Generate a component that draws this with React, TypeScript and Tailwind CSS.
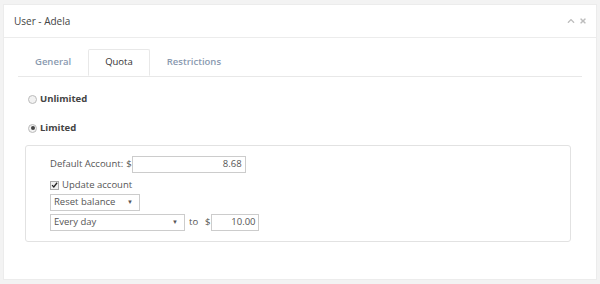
import { FaChevronUp, FaTimes } from "react-icons/fa";

const tabs = ["General", "Quota", "Restrictions"];

export default function App() {
  const active = "Quota";
  return (
    <div
      className="w-[600px] h-[284px] bg-[#f3f3f3] pt-[4px] px-[3px] pb-[4px]"
      style={{ fontFamily: '"Open Sans", sans-serif' }}
    >
      <div className="h-[276px] bg-white border border-[#ececec] flex flex-col">
        {/* header */}
        <div className="h-[33px] flex items-center justify-between pl-[10px] pr-[9px] border-b border-[#ececec]">
          <span className="text-[10px] text-[#444]">User - Adela</span>
          <div className="flex items-center gap-[4px] text-[#bdbdbd]">
            <FaChevronUp className="w-[8px] h-[8px]" />
            <FaTimes className="w-[8px] h-[8px]" />
          </div>
        </div>

        {/* tabs */}
        <div className="mt-[11px] mx-[14px] flex border-b border-[#e8e8e8]">
          {tabs.map((t) =>
            t === active ? (
              <div
                key={t}
                className="h-[27px] px-[16px] flex items-center text-[9.5px] text-[#333] bg-white border border-[#e8e8e8] border-b-white -mb-px rounded-t-[2px]"
              >
                {t}
              </div>
            ) : (
              <div
                key={t}
                className="h-[27px] px-[17px] flex items-center text-[9.5px] font-semibold text-[#8a9ab0]"
              >
                {t}
              </div>
            )
          )}
        </div>

        {/* options */}
        <div className="pl-[24px] pr-[25px]">
          <label className="mt-[15px] h-[14px] flex items-center gap-[3px] text-[9.5px] font-bold text-[#444]">
            <span className="w-[9px] h-[9px] rounded-full border border-[#bbb] bg-[#f2f2f2]" />
            Unlimited
          </label>
          <label className="mt-[15px] h-[14px] flex items-center gap-[3px] text-[9.5px] font-bold text-[#444]">
            <span className="w-[9px] h-[9px] rounded-full border border-[#bbb] bg-[#f2f2f2] flex items-center justify-center">
              <span className="w-[4px] h-[4px] rounded-full bg-[#444]" />
            </span>
            Limited
          </label>

          <div className="mt-[10px] ml-[-3px] h-[97px] border border-[#e2e2e2] rounded-[3px] pt-[10px] pl-[24px] text-[9.5px] text-[#555] flex flex-col">
            <div className="flex items-center h-[17px]">
              <span>Default Account:</span>
              <span className="ml-[3px]">$</span>
              <div className="w-[114px] h-[17px] border border-[#ccc] flex items-center justify-end pr-[3px]">
                8.68
              </div>
            </div>
            <div className="mt-[5px] h-[14px] flex items-center gap-[3px]">
              <span className="w-[9px] h-[9px] border border-[#aaa] bg-[#f0f0f0] flex items-center justify-center">
                <svg viewBox="0 0 10 10" className="w-[8px] h-[8px]">
                  <path d="M1.5 5.2 L4 7.8 L8.7 1.8" stroke="#222" strokeWidth="1.8" fill="none" />
                </svg>
              </span>
              <span>Update account</span>
            </div>
            <div className="mt-[2px] w-[90px] h-[17px] border border-[#ccc] flex items-center justify-between pl-[3px] pr-[6px]">
              <span>Reset balance</span>
              <span className="text-[6px]">▼</span>
            </div>
            <div className="mt-[3px] flex items-center h-[17px]">
              <div className="w-[135px] h-[17px] border border-[#ccc] flex items-center justify-between pl-[3px] pr-[6px]">
                <span>Every day</span>
                <span className="text-[6px]">▼</span>
              </div>
              <span className="ml-[4px]">to</span>
              <span className="ml-[7px]">$</span>
              <div className="w-[48px] h-[17px] border border-[#ccc] flex items-center justify-end pr-[2px]">
                10.00
              </div>
            </div>
          </div>
        </div>
      </div>
    </div>
  );
}
